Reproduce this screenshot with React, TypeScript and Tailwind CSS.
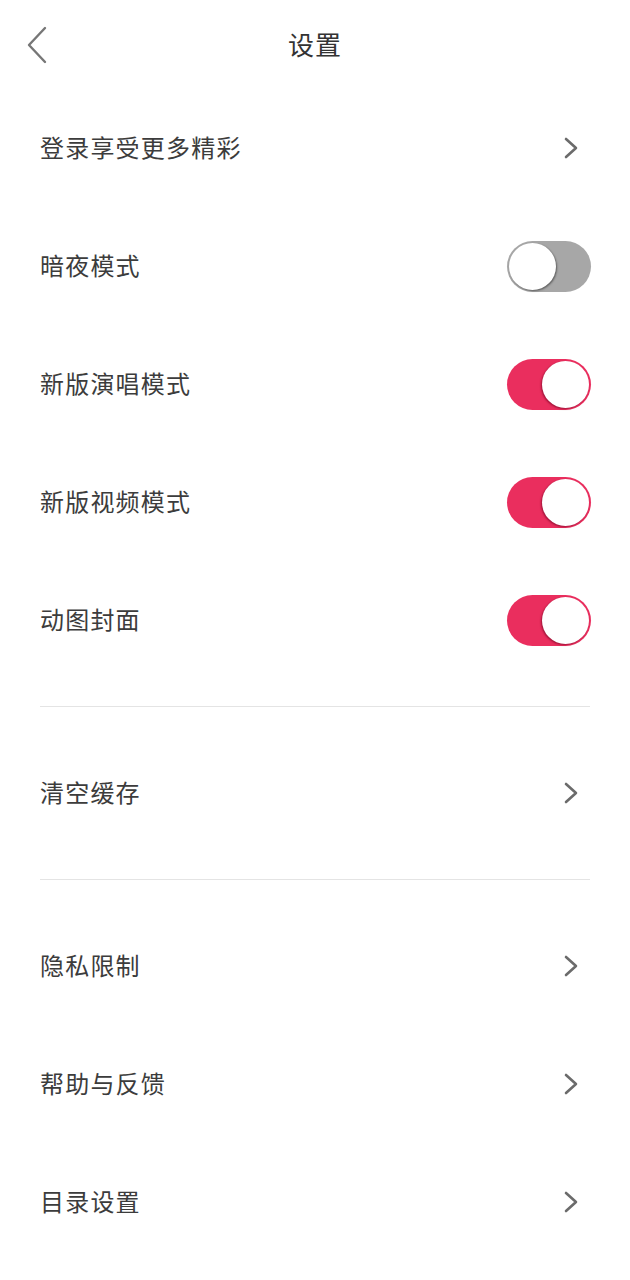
import { useState } from "react"

const font = { fontFamily: '"Noto Sans CJK SC", "Noto Sans", sans-serif' }

function Chevron() {
  return (
    <svg width="20" height="24" viewBox="0 0 20 24" fill="none" className="text-[#6b6b6b]">
      <path d="M5 3 L15 12 L5 21" stroke="currentColor" strokeWidth="2.6" strokeLinecap="round" strokeLinejoin="round" />
    </svg>
  )
}

function Toggle({ on, onClick }: { on: boolean; onClick: () => void }) {
  return (
    <button
      onClick={onClick}
      className={`relative h-[51px] w-[84px] rounded-full transition-colors ${on ? "bg-[#ea2e5e]" : "bg-[#a7a7a7]"}`}
    >
      <span
        className={`absolute top-[2px] h-[47px] w-[47px] rounded-full bg-white transition-all ${
          on ? "left-[35px] shadow-[-1px_1px_2px_rgba(110,0,30,0.6)]" : "left-[2px] shadow-[1px_1px_2px_rgba(0,0,0,0.45)]"
        }`}
      />
    </button>
  )
}

function Row({ label, children }: { label: string; children: React.ReactNode }) {
  return (
    <div className="flex h-[118px] items-center justify-between pl-[40px] pr-[39px]">
      <span className="-mt-[3px] text-[24px] text-[#3c3c3c] tracking-[1.2px]">{label}</span>
      {children}
    </div>
  )
}

function ArrowRow({ label }: { label: string }) {
  return (
    <Row label={label}>
      <div className="mr-[10px] -mt-[1px]">
        <Chevron />
      </div>
    </Row>
  )
}

export default function App() {
  const [dark, setDark] = useState(false)
  const [sing, setSing] = useState(true)
  const [video, setVideo] = useState(true)
  const [gif, setGif] = useState(true)

  return (
    <main className="min-h-screen w-[630px] bg-white" style={font}>
      {/* Header */}
      <div className="relative flex h-[89px] items-center justify-center">
        <button className="absolute left-[24px] top-[25px]">
          <svg width="26" height="40" viewBox="0 0 26 40" fill="none" className="text-[#767676]">
            <path d="M21 3 L5 20 L21 37" stroke="currentColor" strokeWidth="2.4" strokeLinecap="round" strokeLinejoin="round" />
          </svg>
        </button>
        <h1 className="-mt-[2px] text-[26px] tracking-[1px] text-[#333]">设置</h1>
      </div>

      <ArrowRow label="登录享受更多精彩" />
      <Row label="暗夜模式">
        <Toggle on={dark} onClick={() => setDark(v => !v)} />
      </Row>
      <Row label="新版演唱模式">
        <Toggle on={sing} onClick={() => setSing(v => !v)} />
      </Row>
      <Row label="新版视频模式">
        <Toggle on={video} onClick={() => setVideo(v => !v)} />
      </Row>
      <Row label="动图封面">
        <Toggle on={gif} onClick={() => setGif(v => !v)} />
      </Row>

      <div className="mx-[40px] my-[27px] h-px bg-[#e4e4e4]" />
      <ArrowRow label="清空缓存" />
      <div className="mx-[40px] my-[27px] h-px bg-[#e4e4e4]" />

      <ArrowRow label="隐私限制" />
      <ArrowRow label="帮助与反馈" />
      <ArrowRow label="目录设置" />
    </main>
  )
}
